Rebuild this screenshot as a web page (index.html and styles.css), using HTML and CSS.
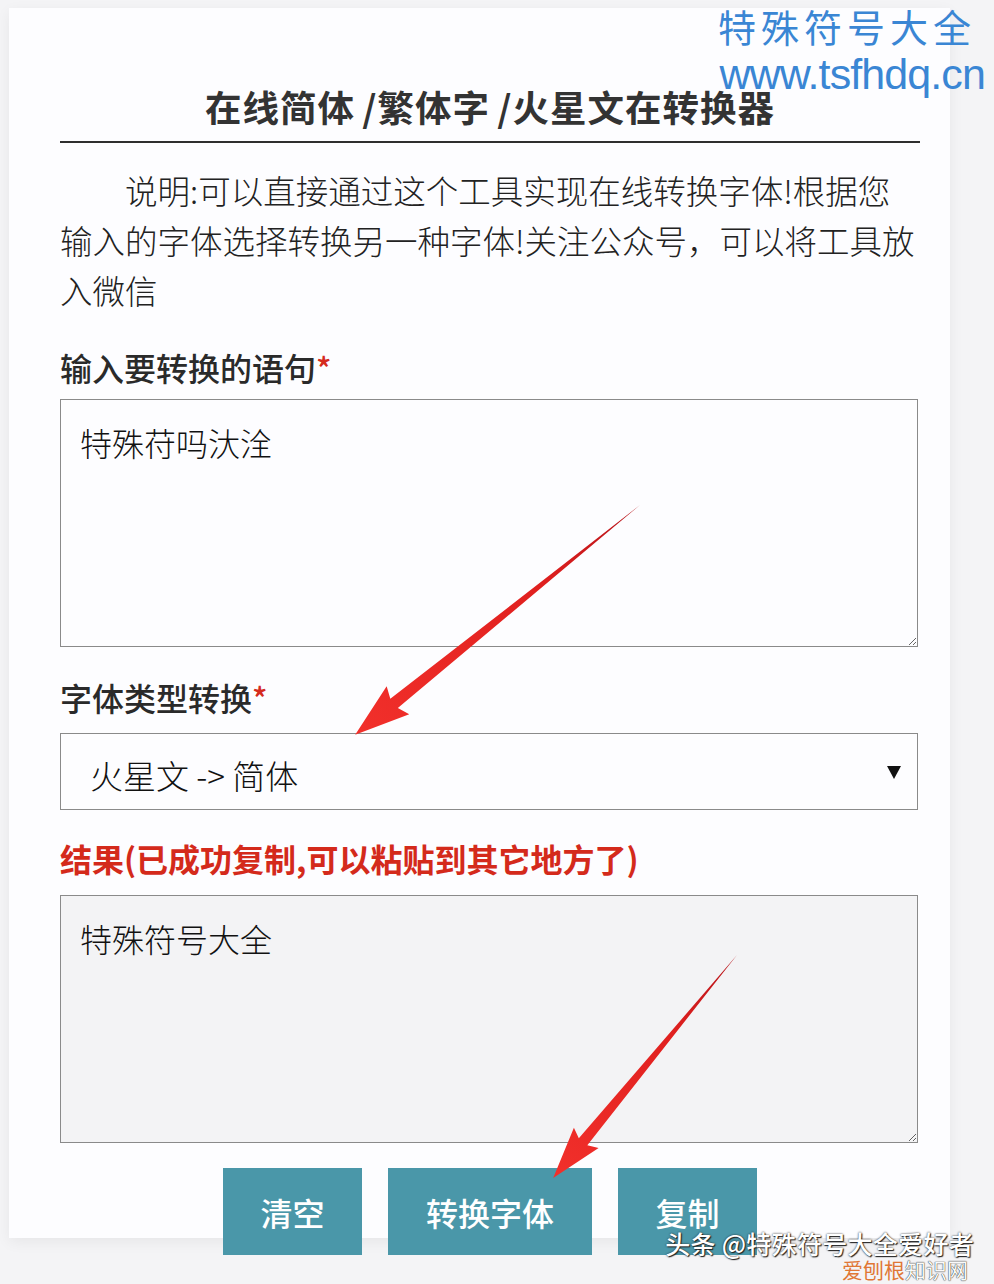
FILE: index.html
```html
<!DOCTYPE html>
<html lang="zh-CN">
<head>
    <meta charset="UTF-8">
    <meta name="viewport" content="width=device-width, initial-scale=1.0">
    <title>在线简体/繁体字/火星文在转换器</title>
    <link rel="stylesheet" href="styles.css">
</head>
<body>
    <div class="watermark-top">
        <span class="wm-name">特殊符号大全</span>
        <span class="wm-url">www.tsfhdq.cn</span>
    </div>

    <article class="tool-card">
        <h1 class="tool-title">在线简体 /繁体字 /火星文在转换器</h1>
        <p class="tool-desc">说明:可以直接通过这个工具实现在线转换字体!根据您<br>输入的字体选择转换另一种字体!关注公众号，可以将工具放<br>入微信</p>

        <label class="field-label label-input" for="src">输入要转换的语句<em>*</em></label>
        <textarea id="src" class="field-text">特殊苻吗汏洤</textarea>

        <label class="field-label label-type" for="type">字体类型转换<em>*</em></label>
        <div class="select-wrap">
            <select id="type" class="field-select">
                <option>火星文 -&gt; 简体</option>
                <option>简体 -&gt; 繁体</option>
                <option>繁体 -&gt; 简体</option>
                <option>简体 -&gt; 火星文</option>
            </select>
        </div>

        <label class="field-label label-result" for="out">结果(已成功复制,可以粘贴到其它地方了)</label>
        <textarea id="out" class="field-text field-result" readonly>特殊符号大全</textarea>

        <div class="btn-row">
            <button type="button" class="btn btn-clear">清空</button>
            <button type="button" class="btn btn-convert">转换字体</button>
            <button type="button" class="btn btn-copy">复制</button>
        </div>
    </article>

    <!-- 标注箭头 -->
    <svg class="arrows" width="994" height="1284" viewBox="0 0 994 1284">
        <defs>
            <linearGradient id="arrowFill" x1="0" y1="0" x2="1" y2="0">
                <stop offset="0" stop-color="#b5141a"/>
                <stop offset="0.35" stop-color="#e0201f"/>
                <stop offset="1" stop-color="#f2302b"/>
            </linearGradient>
        </defs>
        <g transform="translate(640 505) rotate(141.1)">
            <path d="M0 0 L316 -6 L311 -18 L366 0 L311 18 L316 6 Z" fill="url(#arrowFill)"/>
        </g>
        <g transform="translate(737 955) rotate(129.5)">
            <path d="M0 0 L242 -5.5 L237 -16 L289 0 L237 16 L242 5.5 Z" fill="url(#arrowFill)"/>
        </g>
    </svg>

    <div class="watermark-bottom">
        <span class="wm-toutiao">头条 @特殊符号大全爱好者</span>
        <span class="wm-site"><b>爱刨根</b>知识网</span>
    </div>
</body>
</html>
```

FILE: styles.css
```css
body {
    margin: 0;
    width: 994px;
    height: 1284px;
    overflow: hidden;
    position: relative;
    background: #f4f4f6;
    font-family: "Noto Sans CJK SC", "Noto Sans", sans-serif;
    color: #222;
}

.tool-card {
    box-sizing: border-box;
    width: 941px;
    height: 1230px;
    margin: 8px 0 0 9px;
    padding: 75px 30px 0 51px;
    background: #fdfdff;
    box-shadow: 0 4px 14px rgba(0, 0, 0, 0.06);
}

.tool-title {
    margin: 0;
    padding-bottom: 10px;
    border-bottom: 2px solid #2e2e2e;
    font-size: 36.5px;
    line-height: 48px;
    font-weight: 700;
    text-align: center;
    color: #333;
    letter-spacing: 1px;
    word-spacing: -2px;
}

.tool-desc {
    margin: 22px 0 0;
    font-size: 32.5px;
    line-height: 50px;
    font-weight: 300;
    text-indent: 2em;
    color: #222;
}

.field-label {
    display: block;
    font-size: 32px;
    line-height: 50px;
    font-weight: 500;
    color: #2a2a2a;
}

.field-label em {
    font-style: normal;
    color: #d52b1e;
}

.label-input {
    margin-top: 27px;
}

.label-type {
    margin-top: 25px;
}

.label-result {
    margin-top: 23px;
    font-weight: 700;
    color: #d42a1b;
}

.field-text {
    display: block;
    box-sizing: border-box;
    width: 858px;
    height: 248px;
    margin-top: 7px;
    padding: 22px 19px;
    border: 1px solid #8a8a8a;
    border-radius: 0;
    background: #fdfdff;
    font-family: "Noto Sans CJK SC", sans-serif;
    font-size: 32px;
    line-height: 40px;
    font-weight: 300;
    color: #111;
    resize: vertical;
}

.field-result {
    margin-top: 12px;
    background: #f3f3f5;
}

.select-wrap {
    position: relative;
    width: 858px;
    margin-top: 11px;
}

.select-wrap::after {
    content: "";
    position: absolute;
    right: 17px;
    top: 33px;
    border-left: 7px solid transparent;
    border-right: 7px solid transparent;
    border-top: 13px solid #111;
    pointer-events: none;
}

.field-select {
    display: block;
    box-sizing: border-box;
    width: 858px;
    height: 77px;
    padding: 6px 0 0 29px;
    border: 1px solid #8a8a8a;
    border-radius: 0;
    background: #fdfdff;
    appearance: none;
    -webkit-appearance: none;
    font-family: "Noto Sans CJK SC", sans-serif;
    font-size: 33px;
    font-weight: 300;
    color: #111;
}

.btn-row {
    display: flex;
    justify-content: center;
    gap: 26px;
    margin-top: 25px;
    position: relative;
    z-index: 1;
}

.btn {
    height: 87px;
    padding: 0;
    border: 0;
    background: #4a97a9;
    font-family: "Noto Sans CJK SC", sans-serif;
    font-size: 32px;
    font-weight: 500;
    color: #fff;
}

.btn-clear,
.btn-copy {
    width: 139px;
}

.btn-convert {
    width: 204px;
}

.arrows {
    position: absolute;
    left: 0;
    top: 0;
    z-index: 2;
    pointer-events: none;
}

.watermark-top {
    position: absolute;
    top: 3px;
    right: 9px;
    z-index: 3;
    display: flex;
    flex-direction: column;
    align-items: flex-end;
    color: #3a86d4;
}

.wm-name {
    margin-right: 9px;
    font-size: 38px;
    line-height: 46px;
    letter-spacing: 5px;
    font-weight: 400;
}

.wm-url {
    font-family: "Liberation Sans", Arial, sans-serif;
    font-size: 43px;
    line-height: 50px;
    letter-spacing: -0.9px;
}

.watermark-bottom {
    position: absolute;
    right: 20px;
    top: 1229px;
    z-index: 3;
    display: flex;
    flex-direction: column;
    align-items: flex-end;
    color: #fff;
    text-shadow: 0 0 2px #222, 1px 1px 1px #222;
}

.wm-toutiao {
    font-size: 25px;
    line-height: 29px;
    font-weight: 500;
    letter-spacing: 0.3px;
}

.wm-site {
    margin-right: 6px;
    font-size: 21px;
    line-height: 23px;
    color: #fafafa;
    text-shadow: 0 0 1px #333, 0 0 1px #333;
}

.wm-site b {
    font-weight: 400;
    color: #e07735;
    text-shadow: none;
}
```
